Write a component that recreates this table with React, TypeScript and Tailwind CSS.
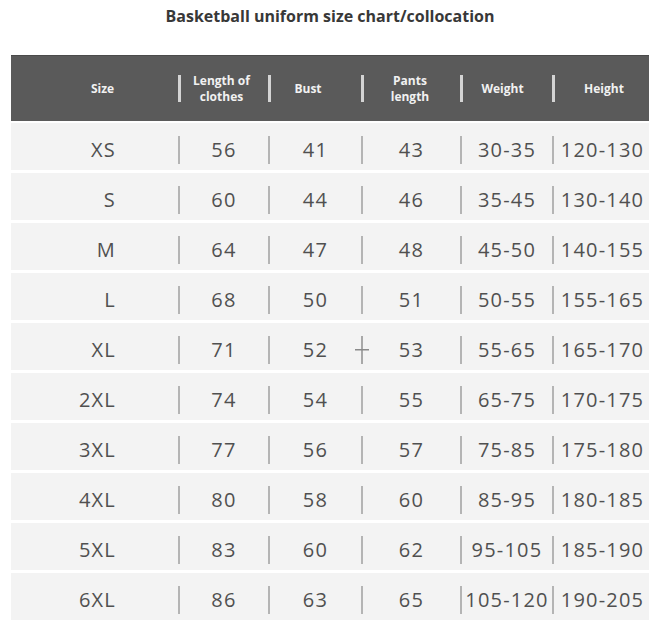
import React from "react";

const cols = "grid grid-cols-[167px_90px_93px_99px_92px_99px]";

const headers: { label: React.ReactNode; pad: string }[] = [
  { label: "Size", pad: "pl-[16px]" },
  { label: <>Length of<br />clothes</>, pad: "pr-[6px]" },
  { label: "Bust", pad: "pr-[16px]" },
  { label: <>Pants<br />length</>, pad: "pr-[4px]" },
  { label: "Weight", pad: "pr-[10px]" },
  { label: "Height", pad: "pl-[2px]" },
];

const rows: string[][] = [
  ["XS", "56", "41", "43", "30-35", "120-130"],
  ["S", "60", "44", "46", "35-45", "130-140"],
  ["M", "64", "47", "48", "45-50", "140-155"],
  ["L", "68", "50", "51", "50-55", "155-165"],
  ["XL", "71", "52", "53", "55-65", "165-170"],
  ["2XL", "74", "54", "55", "65-75", "170-175"],
  ["3XL", "77", "56", "57", "75-85", "175-180"],
  ["4XL", "80", "58", "60", "85-95", "180-185"],
  ["5XL", "83", "60", "62", "95-105", "185-190"],
  ["6XL", "86", "63", "65", "105-120", "190-205"],
];

function Divider({ cross }: { cross?: boolean }) {
  if (cross) {
    // the XL row has a small cross mark on this line
    return (
      <svg width="14" height="28" viewBox="0 0 14 28" className="-mx-[6px] shrink-0">
        <rect x="6" y="0" width="2" height="28" fill="#a8a8a8" />
        <rect x="0" y="13" width="14" height="1.5" fill="#8a8a8a" />
      </svg>
    );
  }
  return <div className="w-[2px] h-[28px] bg-[#b4b4b4] shrink-0" />;
}

export default function App() {
  return (
    <div className="w-[660px] h-[633px] bg-white font-['Open_Sans',sans-serif] overflow-hidden">
      <h1 className="pt-[5px] text-center text-[16px] leading-[22px] font-bold text-[#383838]">
        Basketball uniform size chart/collocation
      </h1>

      {/* header bar */}
      <div className={`${cols} mt-[28px] mx-[11px] h-[66px] bg-[#5a5a5a] border-t border-[#4a4a4a]`}>
        {headers.map((h, i) => (
          <div key={i} className="flex items-center">
            {i > 0 && <div className="w-[3px] h-[27px] bg-[#d4d4d4] shrink-0" />}
            <div className={`flex-1 text-center text-[12px] leading-[16px] font-bold text-[#f1f1f1] ${h.pad}`}>
              {h.label}
            </div>
          </div>
        ))}
      </div>

      {/* size rows */}
      <div className="mt-[2px] mx-[11px] flex flex-col gap-[3px]">
        {rows.map((r) => (
          <div key={r[0]} className={`${cols} h-[47px] bg-[#f3f3f3]`}>
            {r.map((v, i) => (
              <div key={i} className="flex items-center pt-[6px]">
                {i > 0 && <Divider cross={r[0] === "XL" && i === 3} />}
                <div
                  className={`flex-1 text-[20px] leading-[24px] tracking-[1.2px] text-[#505050] ${
                    i === 0 ? "text-right pr-[62px]" : "text-center"
                  }`}
                >
                  {v}
                </div>
              </div>
            ))}
          </div>
        ))}
      </div>
    </div>
  );
}
